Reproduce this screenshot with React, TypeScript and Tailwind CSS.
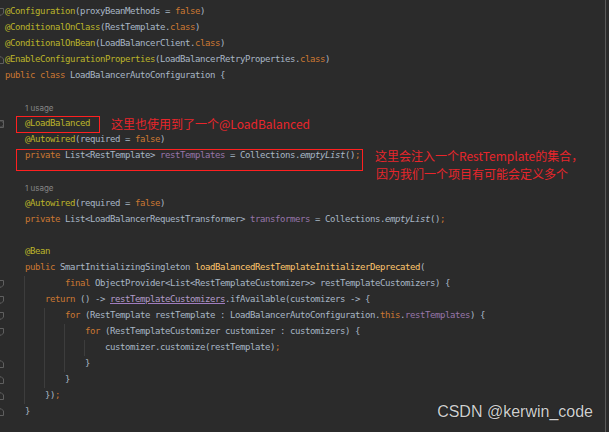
type Tok = [string, string]
type Line = {
  indent?: number
  guides?: number[]
  fold?: "start" | "end" | "both"
  usage?: boolean
  toks?: Tok[]
}

const d = "text-[#a9b7c6]"
const k = "text-[#cc7832]"
const a = "text-[#bbb529]"
const f = "text-[#9876aa]"
const m = "text-[#ffc66d]"
const it = "text-[#a9b7c6] italic"
const u = "text-[#b39bc9] underline decoration-[#a07cc0]"

const lines: Line[] = [
  { fold: "start", toks: [["@Configuration", a], ["(proxyBeanMethods = ", d], ["false", k], [")", d]] },
  { toks: [["@ConditionalOnClass", a], ["(RestTemplate.", d], ["class", k], [")", d]] },
  { toks: [["@ConditionalOnBean", a], ["(LoadBalancerClient.", d], ["class", k], [")", d]] },
  { fold: "end", toks: [["@EnableConfigurationProperties", a], ["(LoadBalancerRetryProperties.", d], ["class", k], [")", d]] },
  { toks: [["public class ", k], ["LoadBalancerAutoConfiguration {", d]] },
  {},
  { indent: 4, usage: true },
  { indent: 4, fold: "both", toks: [["@LoadBalanced", a]] },
  { indent: 4, toks: [["@Autowired", a], ["(required = ", d], ["false", k], [")", d]] },
  {
    indent: 4,
    toks: [["private ", k], ["List<RestTemplate> ", d], ["restTemplates", f], [" = Collections.", d], ["emptyList", it], ["()", d], [";", k]],
  },
  {},
  { indent: 4, usage: true },
  { indent: 4, toks: [["@Autowired", a], ["(required = ", d], ["false", k], [")", d]] },
  {
    indent: 4,
    toks: [["private ", k], ["List<LoadBalancerRequestTransformer> ", d], ["transformers", f], [" = Collections.", d], ["emptyList", it], ["()", d], [";", k]],
  },
  {},
  { indent: 4, toks: [["@Bean", a]] },
  { indent: 4, toks: [["public ", k], ["SmartInitializingSingleton ", d], ["loadBalancedRestTemplateInitializerDeprecated", m], ["(", d]] },
  { indent: 12, guides: [4], fold: "start", toks: [["final ", k], ["ObjectProvider<List<RestTemplateCustomizer>> restTemplateCustomizers) {", d]] },
  { indent: 8, guides: [4], fold: "start", toks: [["return ", k], ["() -> ", d], ["restTemplateCustomizers", u], [".ifAvailable(customizers -> {", d]] },
  {
    indent: 12,
    guides: [4, 8],
    fold: "start",
    toks: [["for ", k], ["(RestTemplate restTemplate : LoadBalancerAutoConfiguration.", d], ["this", k], [".", d], ["restTemplates", f], [") {", d]],
  },
  { indent: 16, guides: [4, 8, 12], fold: "start", toks: [["for ", k], ["(RestTemplateCustomizer customizer : customizers) {", d]] },
  { indent: 20, guides: [4, 8, 12, 16], toks: [["customizer.customize(restTemplate)", d], [";", k]] },
  { indent: 16, guides: [4, 8, 12], fold: "end", toks: [["}", d]] },
  { indent: 12, guides: [4, 8], fold: "end", toks: [["}", d]] },
  { indent: 8, guides: [4], fold: "end", toks: [["})", d], [";", k]] },
  { indent: 4, fold: "end", toks: [["}", d]] },
]

const note = "font-['Noto_Sans_CJK_SC',sans-serif] text-[12px] leading-4 tracking-normal text-[#e8262b]"

function Fold({ kind }: { kind: "start" | "end" | "both" }) {
  return (
    <svg width="5" height="16" viewBox="0 0 5 16" className="block">
      {kind !== "end" && (
        <path d="M-2 4.5 H3.5 V9 L1 11.5 L-2 9" fill="none" stroke="#5f5f5f" strokeWidth="1" />
      )}
      {kind !== "start" && (
        <path d="M-2 11.5 H3.5 V7 L1 4.5 L-2 7" fill="none" stroke="#5f5f5f" strokeWidth="1" />
      )}
    </svg>
  )
}

function Indent({ n, guides }: { n: number; guides: number[] }) {
  const stops = [0, ...guides, n]
  const segs = []
  for (let i = 0; i < stops.length - 1; i++) {
    const g = guides.includes(stops[i])
    segs.push(
      <span
        key={i}
        className={"inline-block h-4 shrink-0 " + (g ? "border-l border-[#3d3d3d] -ml-px" : "")}
        style={{ width: (stops[i + 1] - stops[i]) * 5 + (g ? 1 : 0) }}
      />
    )
  }
  return <>{segs}</>
}

export default function App() {
  return (
    <div className="flex h-[432px] w-[609px] overflow-hidden bg-[#2b2b2b]">
      <div className="w-[605px] pt-[4px] font-['DejaVu_Sans_Mono',monospace] text-[9px] tracking-[-0.42px]">
        {lines.map((ln, i) => (
          <div key={i} className="relative flex h-4 items-center whitespace-pre">
            <div className="w-[5px] h-4 shrink-0 overflow-hidden">{ln.fold && <Fold kind={ln.fold} />}</div>
            <Indent n={ln.indent ?? 0} guides={ln.guides ?? []} />
            {ln.usage && <span className="font-['Inter',sans-serif] text-[8px] tracking-normal text-[#858585]">1 usage</span>}
            {ln.toks?.map(([t, c], j) => (
              <span key={j} className={c}>
                {t}
              </span>
            ))}
            {i === 7 && (
              <>
                <div className="absolute left-[16px] top-0 h-[17px] w-[84px] border border-[#ff2020]" />
                <span className={"ml-[21px] " + note}>这里也使用到了一个@LoadBalanced</span>
              </>
            )}
            {i === 9 && (
              <>
                <div className="absolute left-[16px] top-[1px] h-[22px] w-[347px] border border-[#ff2020]" />
                <span className={"ml-[15px] " + note}>这里会注入一个RestTemplate的集合，</span>
              </>
            )}
            {i === 10 && <span className={"ml-[371px] mt-[3px] " + note}>因为我们一个项目有可能会定义多个</span>}
            {i === 25 && (
              <span className="ml-auto mr-[12px] font-['Liberation_Sans',Arial,sans-serif] text-[16px] leading-4 tracking-normal text-[#cfcfcf] [text-shadow:0_0_1px_#000]">
                CSDN @kerwin_code
              </span>
            )}
          </div>
        ))}
      </div>
      <div className="w-px bg-[#5a5a5a]" />
      <div className="flex-1" />
    </div>
  )
}
